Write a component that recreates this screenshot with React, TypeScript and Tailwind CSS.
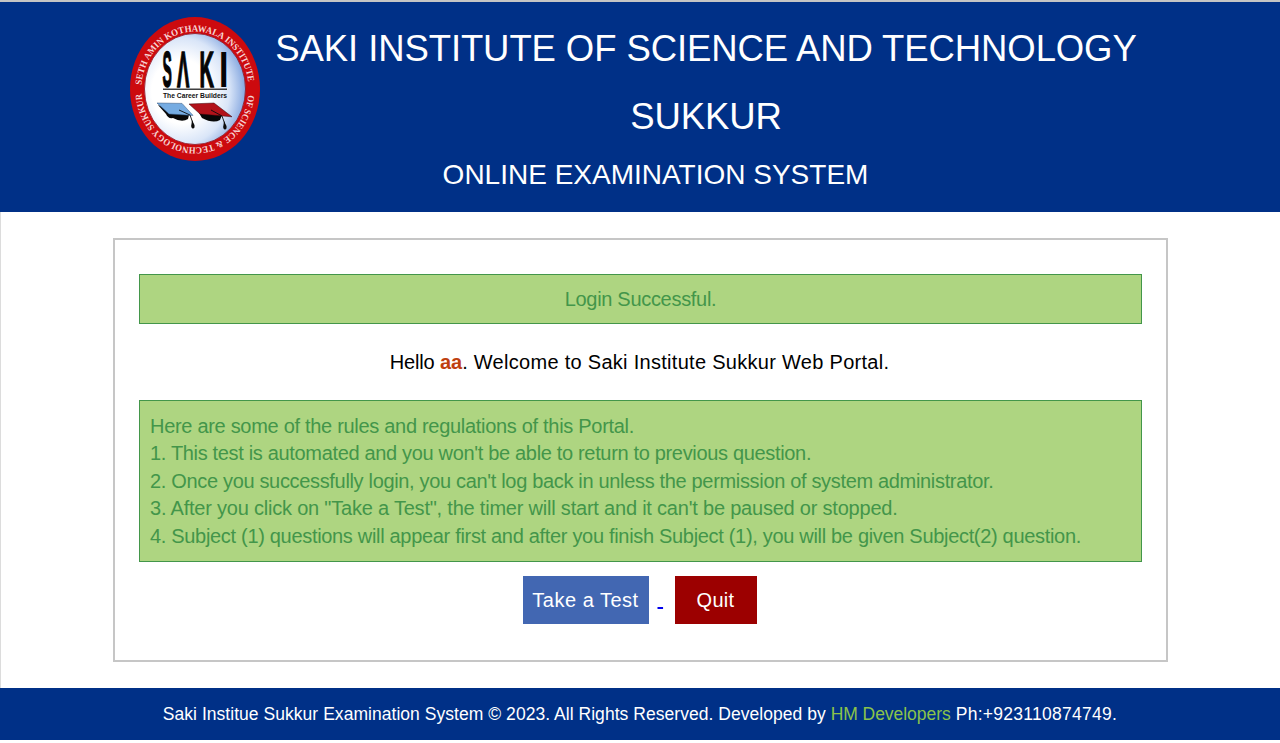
import React from "react";

function Logo() {
  return (
    <svg width="132" height="146" viewBox="0 0 132 146" className="shrink-0">
      <defs>
        <radialGradient id="disc" cx="0.36" cy="0.52" r="0.64">
          <stop offset="0.45" stopColor="#ffffff" />
          <stop offset="0.75" stopColor="#d9e5f8" />
          <stop offset="1" stopColor="#86a8e0" />
        </radialGradient>
        <path id="topArc" d="M12.5 73 A53.5 57.5 0 0 1 119.5 73" />
        <path id="bottomArc" d="M119.5 73 A53.5 58.5 0 0 1 12.5 73" />
      </defs>
      <ellipse cx="66" cy="73" rx="65" ry="72" fill="#cc0a0e" />
      <ellipse cx="66" cy="73" rx="50.5" ry="55.5" fill="url(#disc)" stroke="#8f1525" strokeWidth="0.8" />
      <g fill="#f6d5d5" fontFamily="Liberation Serif, serif" fontWeight="700" fontSize="9.4">
        <text><textPath href="#topArc" startOffset="4" textLength="163" lengthAdjust="spacingAndGlyphs">SETH AMIN KOTHAWALA INSTITUTE</textPath></text>
        <text><textPath href="#bottomArc" startOffset="6" textLength="165" lengthAdjust="spacingAndGlyphs">OF SCIENCE &amp; TECHNOLOGY SUKKUR</textPath></text>
      </g>
      <g fill="#050505" stroke="#050505" strokeWidth="0.3" fontFamily="Liberation Sans, sans-serif" fontWeight="700" fontSize="10">
        <text transform="translate(33.5 70.5) scale(1.4 5)">S</text>
        <text transform="translate(48 70.5) scale(1.85 5)">Λ</text>
        <text transform="translate(70.5 70.5) scale(2 5)">K</text>
        <text transform="translate(90 70.5) scale(3.4 5)" strokeWidth="0">I</text>
      </g>
      <rect x="34" y="72.6" width="64" height="1.2" fill="#111" />
      <text x="34" y="81.8" fontFamily="Liberation Sans, sans-serif" fontWeight="700" fontSize="8" textLength="64" lengthAdjust="spacingAndGlyphs" fill="#111">The Career Builders</text>
      <path d="M29 89 L37 98 Q39 103 44 102 Q53 107 59 103 L60 99 Z" fill="#080808" />
      <path d="M28 87 L53 87.4 L64 99.4 L40 98 Z" fill="#76ace2" stroke="#2b4f78" strokeWidth="0.5" />
      <path d="M70 97 L73 102 Q84 108 91 104 L93 99 Z" fill="#080808" />
      <path d="M60 88 L85 87 L103 100.8 L71 98 Z" fill="#b3121a" stroke="#3a0508" strokeWidth="0.5" />
      <path d="M50 94 L61 99 L63.5 106 M82 94 L93 100 L95.5 107" fill="none" stroke="#0b0b0b" strokeWidth="0.9" />
      <path d="M63 104 L65.5 109 Q66 113 63.5 112.5 Q61.5 111 62.5 108 Z M95 105 L97.5 110 Q98 114 95.5 113.5 Q93.5 112 94.5 109 Z" fill="#0b0b0b" />
    </svg>
  );
}

const rules = [
  { text: "Here are some of the rules and regulations of this Portal.", spacing: "tracking-[-0.3px]" },
  { text: "1. This test is automated and you won't be able to return to previous question.", spacing: "tracking-[-0.33px]" },
  {
    text: "2. Once you successfully login, you can't log back in unless the permission of system administrator.",
    spacing: "tracking-[-0.33px]",
  },
  {
    text: "3. After you click on \"Take a Test\", the timer will start and it can't be paused or stopped.",
    spacing: "tracking-[-0.21px]",
  },
  {
    text: "4. Subject (1) questions will appear first and after you finish Subject (1), you will be given Subject(2) question.",
    spacing: "tracking-[-0.315px]",
  },
];

export default function App() {
  return (
    <div className="flex h-[743px] w-[1280px] flex-col overflow-hidden bg-white font-['Liberation_Sans',Arial,sans-serif] text-[20px]">
      <div className="h-[2px] shrink-0 bg-[#c4c4c4]" />
      <header className="flex h-[210px] shrink-0 bg-[#003087] pl-[129px] pt-[14px] text-white">
        <Logo />
        <div className="-mt-px flex w-[890px] flex-col items-center whitespace-nowrap">
          <h1 className="text-center text-[36.5px] leading-[67.5px] tracking-[-0.1px]">
            SAKI INSTITUTE OF SCIENCE AND TECHNOLOGY
            <br />
            SUKKUR
          </h1>
          <h2 className="mr-[101px] pt-px text-[28px] leading-[48px]">ONLINE EXAMINATION SYSTEM</h2>
        </div>
      </header>
      <main className="flex h-[476px] shrink-0 flex-col items-center border-l border-[#dcdcdc] pt-[26px]">
        <section className="flex h-[424px] w-[1055px] flex-col items-center border-2 border-[#c6c6c6] px-6 pt-[34px] whitespace-nowrap">
          <div className="flex h-[50px] w-full items-center justify-center border border-[#43964a] bg-[#aed581] tracking-[-0.3px] text-[#43964a]">
            Login Successful.
          </div>
          <p className="mt-[24px] mr-[2px] leading-7 tracking-[0.29px] text-black">
            <span className="tracking-[-0.15px]">Hello </span>
            <b className="tracking-normal text-[#bf3f0f]">aa</b>. Welcome to Saki Institute Sukkur Web Portal.
          </p>
          <div className="mt-[24px] h-[162px] w-full border border-[#43964a] bg-[#aed581] px-[10px] pt-[11.5px] leading-[27.6px] text-[#43964a]">
            {rules.map((rule) => (
              <div key={rule.text} className={rule.spacing}>
                {rule.text}
              </div>
            ))}
          </div>
          <div className="mt-[14px] mr-[2px] flex text-white">
            <button className="h-[48px] w-[126px] bg-[#4267b2] tracking-[0.5px]">Take a Test</button>
            <a className="w-[26px] pt-[8px] pl-[9px] whitespace-pre text-[#0000ee] underline underline-offset-1">{"\u00a0"}</a>
            <button className="h-[48px] w-[82px] bg-[#9c0000] tracking-[0.3px]">Quit</button>
          </div>
        </section>
      </main>
      <footer className="flex h-[52px] shrink-0 items-center justify-center bg-[#003087] pt-px text-[17.5px] tracking-[0.07px] whitespace-pre text-white">
        <span className="tracking-[0.04px]">Saki Institue Sukkur Examination System © 2023. All Rights Reserved. Developed by </span>
        <span className="tracking-[-0.05px] text-[#8bc34a]">HM Developers</span>
        <span className="tracking-[0.27px]"> Ph:+923110874749.</span>
      </footer>
    </div>
  );
}
